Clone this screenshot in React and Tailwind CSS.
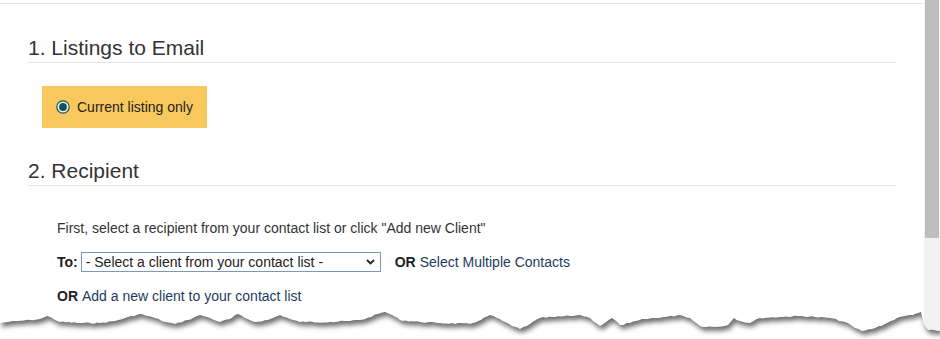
import React from 'react';

// rough outline of the torn paper edge, y is relative to the overlay top (page y 300)
const EDGE = [
  [0, 23], [7, 22], [18, 21], [30, 20], [40, 19], [47, 16], [52, 18], [60, 22], [80, 23], [100, 23],
  [115, 21], [125, 18], [140, 14], [148, 16], [155, 18], [165, 22], [175, 24], [188, 20], [200, 15],
  [210, 18], [220, 22], [230, 19], [238, 14], [245, 18], [255, 22], [268, 20], [280, 15], [290, 19],
  [300, 22], [330, 22], [350, 21], [365, 19], [378, 14], [385, 12], [392, 15], [400, 20], [420, 22],
  [440, 23], [470, 24], [478, 21], [490, 15], [497, 18], [505, 22], [512, 26], [520, 29], [530, 24],
  [540, 18], [555, 17], [570, 16], [580, 15], [590, 18], [600, 26], [606, 22], [612, 18], [620, 25],
  [630, 23], [645, 19], [665, 17], [680, 15], [690, 18], [700, 26], [715, 27], [728, 25], [734, 18],
  [740, 21], [750, 23], [760, 18], [780, 17], [800, 16], [815, 17], [830, 18], [845, 22], [855, 28],
  [862, 31], [872, 29], [885, 24], [897, 18], [910, 15], [918, 13], [921, 12], [924, 25], [928, 30],
  [940, 31],
];

// add small jaggies between the main points
const jagged = () => {
  const pts = [];
  let seed = 7;
  const rnd = () => {
    seed = (seed * 9301 + 49297) % 233280;
    return seed / 233280;
  };
  for (let i = 0; i < EDGE.length - 1; i++) {
    const [x1, y1] = EDGE[i];
    const [x2, y2] = EDGE[i + 1];
    const steps = Math.max(1, Math.round((x2 - x1) / 3));
    for (let s = 0; s < steps; s++) {
      const t = s / steps;
      const jitter = s === 0 ? 0 : (rnd() - 0.5) * 1.4;
      pts.push([x1 + (x2 - x1) * t, y1 + (y2 - y1) * t + jitter]);
    }
  }
  pts.push(EDGE[EDGE.length - 1]);
  return pts;
};

const TornEdge = () => {
  const pts = jagged();
  const line = pts.map(([x, y]) => `${x.toFixed(1)},${y.toFixed(1)}`).join(' ');
  const below = `${line} 940,40 0,40`;
  const above = `${line} 940,-30 0,-30`;
  return (
    <svg className="absolute left-0 top-[300px]" width="940" height="39" viewBox="0 0 940 39">
      <defs>
        <clipPath id="belowEdge">
          <polygon points={below} />
        </clipPath>
        <filter id="edgeBlur" x="-5%" y="-50%" width="110%" height="200%">
          <feGaussianBlur stdDeviation="2.8" />
        </filter>
      </defs>
      <polygon points={below} fill="#ffffff" />
      <g clipPath="url(#belowEdge)">
        <polygon points={above} fill="#6e6e6e" filter="url(#edgeBlur)" transform="translate(2,4)" />
      </g>
    </svg>
  );
};

const Radio = () => (
  <svg width="14" height="14" viewBox="0 0 14 14" className="shrink-0">
    <circle cx="7" cy="7" r="6.2" fill="#fdf3dc" stroke="#0d5560" strokeWidth="1.2" />
    <circle cx="7" cy="7" r="3.9" fill="#0d5560" />
  </svg>
);

const SectionHeading = ({ children }) => (
  <h2 className="border-b border-[#e3e3e3] pb-[2px] text-[21px] leading-[25px] text-[#333]">{children}</h2>
);

export default function App() {
  return (
    <div
      className="relative flex h-[339px] w-[940px] overflow-hidden bg-white"
      style={{ fontFamily: '"Liberation Sans", Arial, sans-serif' }}
    >
      <div className="flex-1 pt-[3px]">
        <div className="border-t border-[#e6e6e6] px-[28px]">
          <div className="mt-[31px]">
            <SectionHeading>1. Listings to Email</SectionHeading>
          </div>

          <div className="ml-[14px] mt-[23px] flex h-[42px] w-[165px] items-center gap-[7px] bg-[#f9c85c] pl-[14px] text-[14px] text-[#222]">
            <Radio />
            <span>Current listing only</span>
          </div>

          <div className="mt-[30px]">
            <SectionHeading>2. Recipient</SectionHeading>
          </div>

          <div className="pl-[29px] text-[14px] leading-[20px] text-[#333]">
            <p className="mt-[32px]">First, select a recipient from your contact list or click "Add new Client"</p>

            <div className="mt-[14px] flex h-[20px] items-center">
              <span className="mr-[3px] font-bold text-[#222]">To:</span>
              <div className="relative flex h-[20px] w-[300px] items-center border border-[#7b98b8] bg-white pl-[4px] text-[#222]">
                <span>- Select a client from your contact list -</span>
                <svg className="absolute right-[5px] top-[6px]" width="9" height="6" viewBox="0 0 9 6">
                  <path d="M1 1 L4.5 4.5 L8 1" fill="none" stroke="#222" strokeWidth="1.8" />
                </svg>
              </div>
              <span className="ml-[14px] font-bold text-[#222]">OR</span>
              <span className="ml-[4px] text-[#1d3c5c]">Select Multiple Contacts</span>
            </div>

            <p className="mt-[14px]">
              <span className="font-bold text-[#222]">OR</span>
              <span className="ml-[4px] text-[#1d3c5c]">Add a new client to your contact list</span>
            </p>
          </div>
        </div>
      </div>

      <div className="flex w-[16px] flex-col bg-[#f1f1f1]">
        <div className="mx-[1px] h-[238px] bg-[#bdbdbd]" />
      </div>

      <TornEdge />
    </div>
  );
}
